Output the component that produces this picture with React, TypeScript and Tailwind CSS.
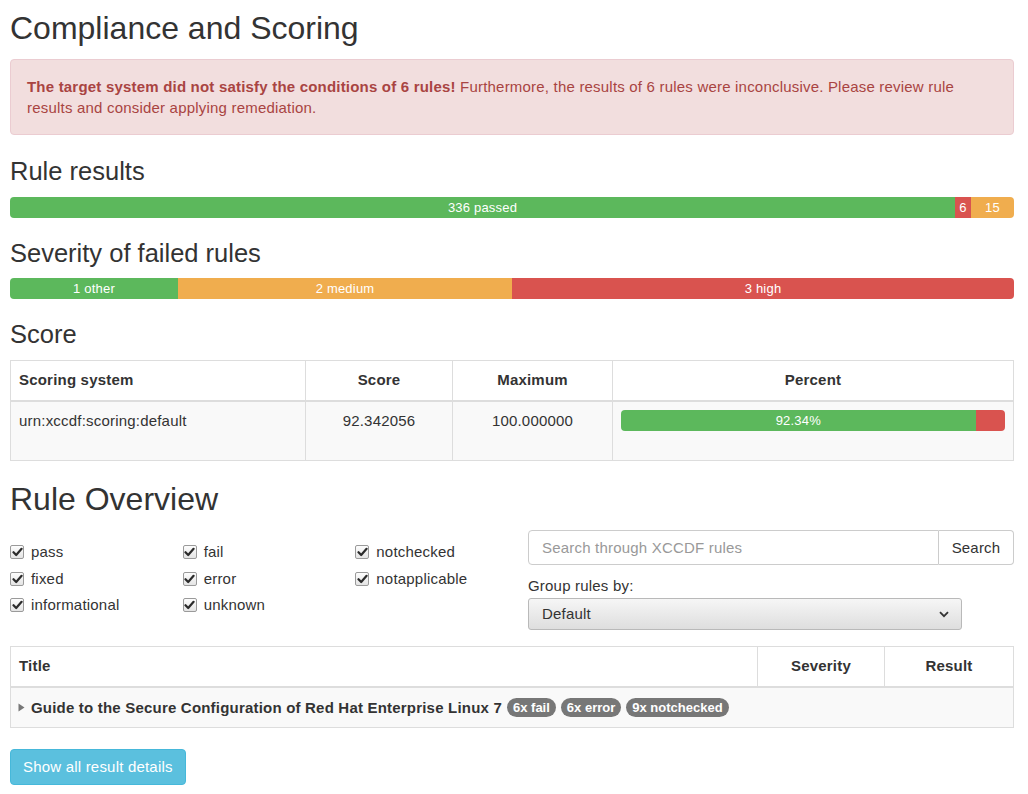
import React from 'react';

const Check = () => (
  <span className="inline-flex items-center justify-center w-[14px] h-[14px] rounded-[2px] border border-[#9a9a9a] bg-gradient-to-b from-[#fdfdfd] to-[#e4e4e4] mr-[7px] shrink-0">
    <svg width="11" height="10" viewBox="0 0 11 10">
      <path d="M1.5 5.2 L4.2 8 L9.6 1.8" fill="none" stroke="#2b2b2b" strokeWidth="2.2" strokeLinecap="round" strokeLinejoin="round" />
    </svg>
  </span>
);

const Filter = ({ label }: { label: string }) => (
  <label className="flex items-center h-[26.5px]">
    <Check />
    <span>{label}</span>
  </label>
);

const Badge = ({ children }: { children: React.ReactNode }) => (
  <span className="inline-block bg-[#777] text-white text-[13px] font-bold leading-[13px] px-[6px] py-[3px] rounded-[10px] ml-[5px] tracking-normal">
    {children}
  </span>
);

export default function App() {
  return (
    <div className="bg-white text-[#333] text-[15px] leading-[20px] tracking-[0.2px] pl-[10px] pr-[14px] min-h-[794px]" style={{ fontFamily: '"Liberation Sans", Arial, sans-serif' }}>
      <h2 className="text-[32px] leading-[35px] tracking-normal pt-[11px] mb-[13px]">Compliance and Scoring</h2>

      <div className="border border-[#ebccd1] bg-[#f2dede] text-[#a94442] rounded-[4px] px-[16px] py-[16px] leading-[21px]">
        <strong>The target system did not satisfy the conditions of 6 rules!</strong> Furthermore, the results of 6 rules were inconclusive. Please review rule results and consider applying remediation.
      </div>

      <h3 className="text-[25.5px] leading-[28px] tracking-normal mt-[22px] mb-[12px]">Rule results</h3>
      <div className="flex h-[21px] rounded-[4px] overflow-hidden text-[13px] leading-[21px] text-white text-center">
        <div className="bg-[#5cb85c] w-[945px]">336 passed</div>
        <div className="bg-[#d9534f] w-[16px]">6</div>
        <div className="bg-[#f0ad4e] flex-1">15</div>
      </div>

      <h3 className="text-[25.5px] leading-[28px] tracking-normal mt-[21px] mb-[11px]">Severity of failed rules</h3>
      <div className="flex h-[21px] rounded-[4px] overflow-hidden text-[13px] leading-[21px] text-white text-center">
        <div className="bg-[#5cb85c] w-[168px]">1 other</div>
        <div className="bg-[#f0ad4e] w-[334px]">2 medium</div>
        <div className="bg-[#d9534f] flex-1">3 high</div>
      </div>

      <h3 className="text-[25.5px] leading-[28px] tracking-normal mt-[21px] mb-[12px]">Score</h3>
      <table className="w-full border border-[#ddd] border-collapse">
        <thead>
          <tr className="font-bold">
            <th className="border border-[#ddd] border-b-2 text-left px-[8px] h-[40px] w-[295px]">Scoring system</th>
            <th className="border border-[#ddd] border-b-2 text-center px-[8px] w-[147px]">Score</th>
            <th className="border border-[#ddd] border-b-2 text-center px-[8px] w-[160px]">Maximum</th>
            <th className="border border-[#ddd] border-b-2 text-center px-[8px]">Percent</th>
          </tr>
        </thead>
        <tbody>
          <tr className="bg-[#f9f9f9] align-top">
            <td className="border border-[#ddd] px-[8px] pt-[9px] h-[60px]">urn:xccdf:scoring:default</td>
            <td className="border border-[#ddd] px-[8px] pt-[9px] text-center">92.342056</td>
            <td className="border border-[#ddd] px-[8px] pt-[9px] text-center">100.000000</td>
            <td className="border border-[#ddd] px-[8px] pt-[8px]">
              <div className="flex h-[21px] rounded-[4px] overflow-hidden text-[13px] leading-[21px] text-white text-center">
                <div className="bg-[#5cb85c] w-[92.34%]">92.34%</div>
                <div className="bg-[#d9534f] flex-1"></div>
              </div>
            </td>
          </tr>
        </tbody>
      </table>

      <h2 className="text-[32px] leading-[35px] tracking-normal mt-[21px] mb-[12px]">Rule Overview</h2>
      <div className="flex">
        <div className="w-[518px] grid grid-cols-3 pt-[10px]">
          <div>
            <Filter label="pass" />
            <Filter label="fixed" />
            <Filter label="informational" />
          </div>
          <div>
            <Filter label="fail" />
            <Filter label="error" />
            <Filter label="unknown" />
          </div>
          <div>
            <Filter label="notchecked" />
            <Filter label="notapplicable" />
          </div>
        </div>
        <div className="flex-1 pt-[1px]">
          <div className="flex h-[35px]">
            <div className="flex-1 border border-[#ccc] rounded-l-[4px] px-[13px] flex items-center text-[#999]">Search through XCCDF rules</div>
            <div className="w-[75px] border border-l-0 border-[#ccc] rounded-r-[4px] flex items-center justify-center">Search</div>
          </div>
          <div className="mt-[11px] leading-[20px]">Group rules by:</div>
          <div className="w-[434px] h-[32px] mt-[2px] border border-[#b9b9b9] rounded-[3px] bg-gradient-to-b from-[#f6f6f6] to-[#dedede] flex items-center justify-between pl-[13px] pr-[12px]">
            <span>Default</span>
            <svg width="10" height="7" viewBox="0 0 10 7">
              <path d="M1 1.2 L5 5.2 L9 1.2" fill="none" stroke="#333" strokeWidth="1.8" />
            </svg>
          </div>
        </div>
      </div>

      <table className="w-full border border-[#ddd] border-collapse mt-[16px]">
        <thead>
          <tr className="font-bold">
            <th className="border border-[#ddd] border-b-2 text-left px-[8px] h-[40px]">Title</th>
            <th className="border border-[#ddd] border-b-2 text-center px-[8px] w-[127px]">Severity</th>
            <th className="border border-[#ddd] border-b-2 text-center px-[8px] w-[129px]">Result</th>
          </tr>
        </thead>
        <tbody>
          <tr className="bg-[#f9f9f9]">
            <td colSpan={3} className="border border-[#ddd] px-[8px] h-[41px]">
              <span className="inline-flex items-center">
                <svg width="7" height="9" viewBox="0 0 7 9" className="mr-[6px] ml-[-1px]">
                  <path d="M0.5 0.5 L6.5 4.5 L0.5 8.5 Z" fill="#777" />
                </svg>
                <strong>Guide to the Secure Configuration of Red Hat Enterprise Linux 7</strong>
                <Badge>6x fail</Badge>
                <Badge>6x error</Badge>
                <Badge>9x notchecked</Badge>
              </span>
            </td>
          </tr>
        </tbody>
      </table>

      <button className="mt-[21px] h-[36px] px-[12px] bg-[#5bc0de] border border-[#46b8da] rounded-[4px] text-white text-[15px] tracking-[0.2px]">
        Show all result details
      </button>
    </div>
  );
}
